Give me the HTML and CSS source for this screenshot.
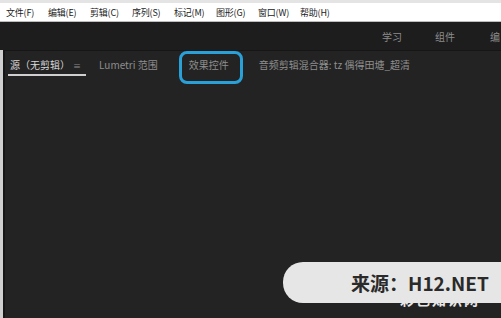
FILE: index.html
```html
<!DOCTYPE html>
<html>
<head>
<meta charset="utf-8">
<link rel="stylesheet" href="styles.css">
</head>
<body>
<div class="app">
  <div class="topstrip"></div>
  <nav class="menubar">
    <span class="mi">文件(F)</span>
    <span class="mi">编辑(E)</span>
    <span class="mi">剪辑(C)</span>
    <span class="mi">序列(S)</span>
    <span class="mi">标记(M)</span>
    <span class="mi">图形(G)</span>
    <span class="mi">窗口(W)</span>
    <span class="mi">帮助(H)</span>
  </nav>
  <div class="header">
    <span class="ws">学习</span>
    <span class="ws">组件</span>
    <span class="ws">编</span>
  </div>
  <div class="main">
    <div class="edge"></div>
    <div class="panel">
      <div class="tabs">
        <span class="tab active">源（无剪辑）<span class="menuicon">≡</span></span>
        <span class="tab lum">Lumetri 范围</span>
        <span class="tab boxed">效果控件</span>
        <span class="tab">音频剪辑混合器: tz 偶得田塘_超清</span>
      </div>
      <div class="body"></div>
    </div>
  </div>
  <div class="under">彩色知识网</div>
  <div class="pill">来源：H12.NET</div>
</div>
</body>
</html>
```
FILE: styles.css
```css
html, body { margin: 0; padding: 0; }
body {
  width: 501px; height: 318px; overflow: hidden;
  font-family: "Noto Sans CJK SC", "Noto Sans", sans-serif;
  background: #232323;
}
.app { position: relative; width: 501px; height: 318px; display: flex; flex-direction: column; }
.topstrip { height: 3px; background: #e4e4e4; }
.menubar {
  height: 18px; background: #ffffff; display: flex; align-items: center;
  padding-left: 6px; font-size: 9px; color: #222; border-bottom: 1px solid #bdbdbd;
}
.mi { width: 30px; margin-right: 12px; white-space: nowrap; letter-spacing: -0.2px; }
.header {
  height: 28px; background: #1d1d1d; display: flex; align-items: center;
  justify-content: flex-end; font-size: 10px; color: #8c8c8c;
}
.ws { margin-left: 33px; }
.ws:last-child { margin-left: 35px; width: 11px; overflow: hidden; white-space: nowrap; }
.main { flex: 1; display: flex; background: #1e1e1e; }
.edge { width: 3px; background: #cfcfcf; }
.panel { flex: 1; display: flex; flex-direction: column; background: #232323; border-left: 2px solid #161616; border-top: 1px solid #161616; }
.tabs { height: 28px; display: flex; align-items: center; padding-left: 5px; font-size: 10px; line-height: 14px; color: #8e8e8e; }
.tab { margin-right: 30px; white-space: nowrap; position: relative; }
.tab.active { color: #d6d6d6; margin-right: 18px; }
.tab.active::after {
  content: ""; position: absolute; left: -2px; right: -5px; bottom: -3px; height: 2px; background: #cfcfcf;
}
.tab.lum { margin-right: 31px; }
.menuicon { font-size: 8px; color: #8e8e8e; margin-left: 3px; }
.tab.boxed::before {
  content: ""; position: absolute; left: -10px; right: -14px; top: -7px; bottom: -12px;
  border: 3px solid #2aa0d8; border-radius: 8px;
}
.body { flex: 1; }
.under {
  position: absolute; left: 400px; top: 289px; font-size: 14px; font-weight: bold; color: #e8e8e8;
  letter-spacing: 2px;
}
.pill {
  position: absolute; left: 283px; top: 262px; width: 240px; height: 41px;
  background: #e6e6e6; border-radius: 20px 0 0 20px;
  font-family: "Noto Sans CJK SC", "Liberation Sans", sans-serif;
  font-size: 19px; font-weight: bold; color: #2a2a2a;
  display: flex; align-items: center; padding-left: 68px; box-sizing: border-box;
}
```
